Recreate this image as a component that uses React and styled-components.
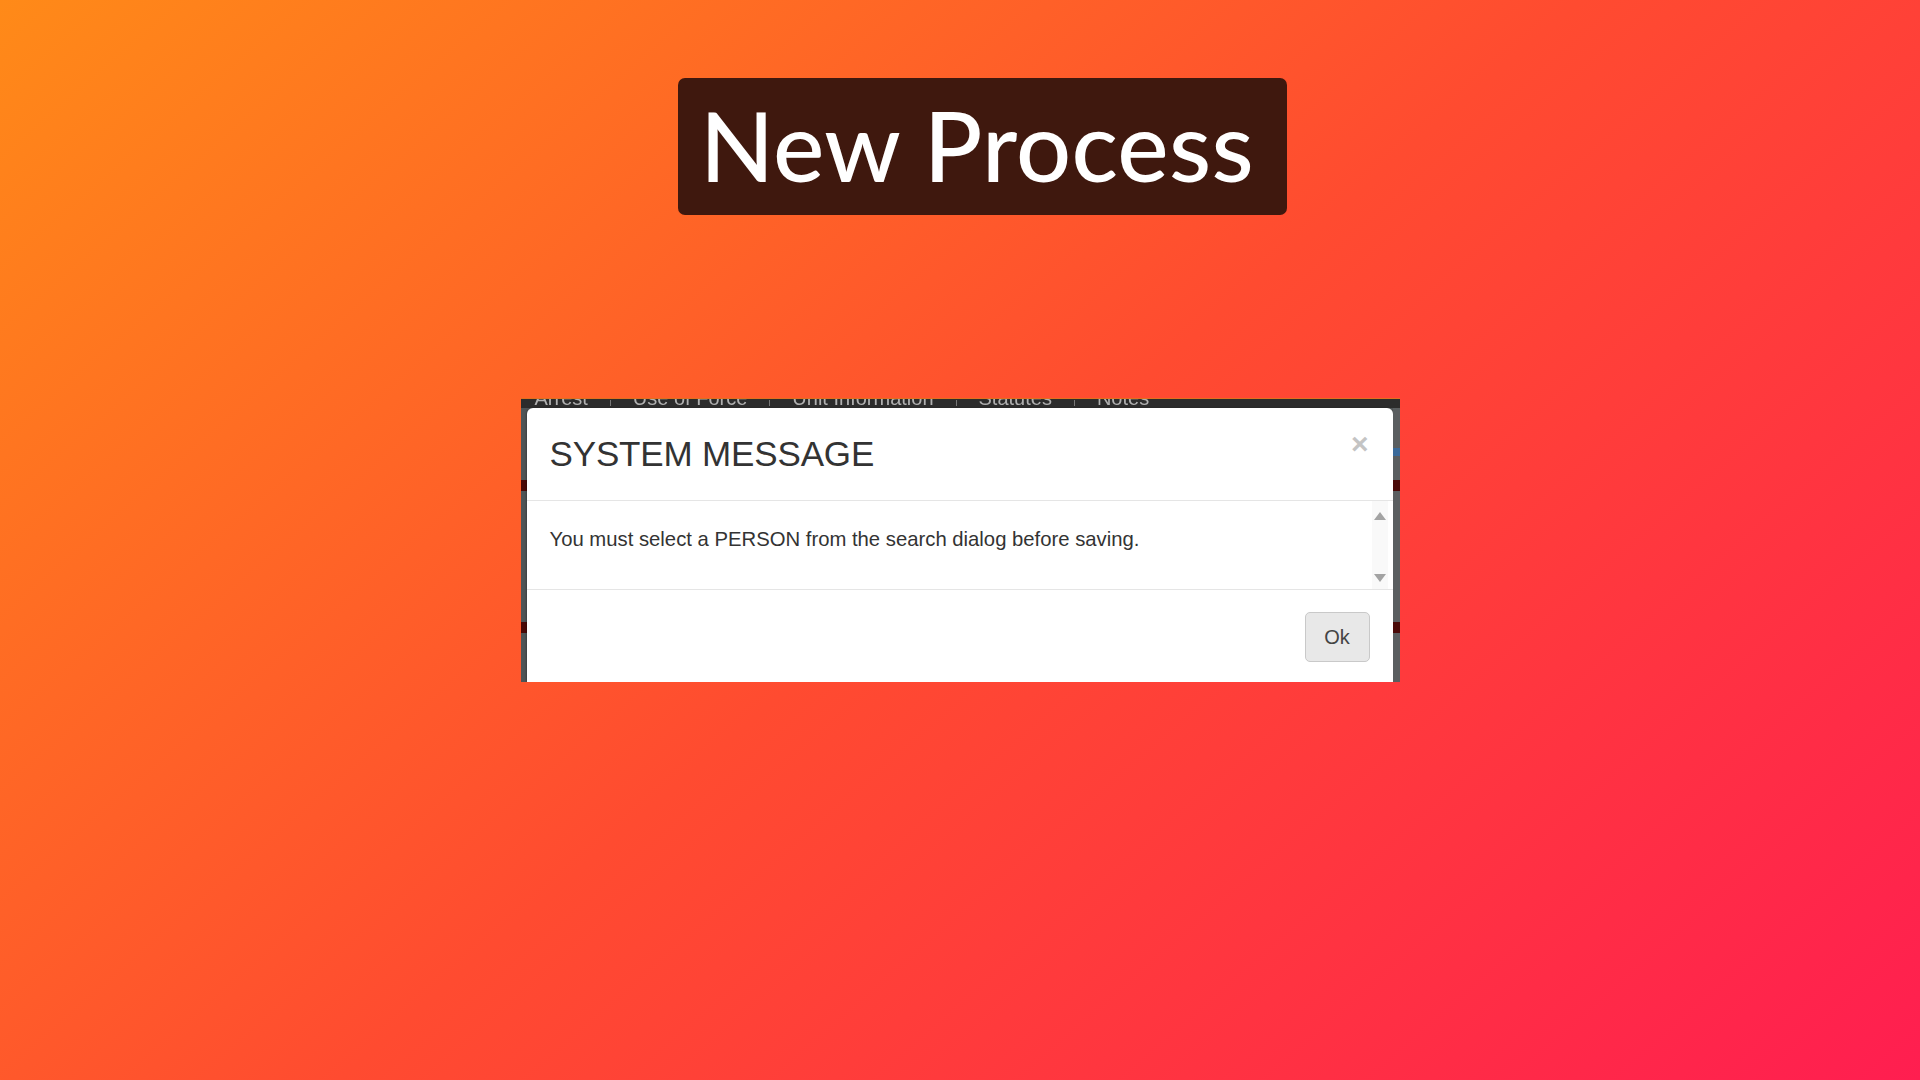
import React from "react";
import styled, { createGlobalStyle } from "styled-components";

const Global = createGlobalStyle`
  html, body { margin: 0; padding: 0; }
  body {
    width: 1920px;
    height: 1080px;
    overflow: hidden;
    font-family: "Liberation Sans", Arial, sans-serif;
  }
  #root { width: 100%; height: 100%; }
`;

const Page = styled.main`
  width: 1920px;
  height: 1080px;
  box-sizing: border-box;
  padding-top: 78px;
  display: flex;
  flex-direction: column;
  align-items: center;
  background: linear-gradient(139deg, #ff8a18 0%, #ff4b30 50%, #ff1e50 100%);
`;

const TitleBox = styled.h1`
  margin: 0 0 0 45px;
  box-sizing: border-box;
  width: 609px;
  height: 137px;
  padding: 0 0 4px 22px;
  display: flex;
  align-items: center;
  background: #3f180e;
  border-radius: 7px;
  color: #ffffff;
  font-family: Lato, "Open Sans", sans-serif;
  font-weight: 500;
  font-size: 97px;
  line-height: 1;
  letter-spacing: 0.3px;
  white-space: nowrap;
`;

const Shot = styled.section`
  margin-top: 183px;
  width: 879px;
  height: 284px;
  display: grid;
  grid-template-columns: 6px 1fr 7px;
  grid-template-rows: 10px 1fr;
  background: #505456;
  overflow: hidden;
`;

const NavStrip = styled.div`
  grid-column: 1 / 4;
  background: #2c2c2c;
  border-top: 1px solid #e0701e;
  overflow: hidden;
  display: flex;
  align-items: flex-start;
  padding-left: 14px;
`;

const NavItem = styled.span`
  margin-top: -11px;
  font-size: 20px;
  line-height: 20px;
  color: #b0b0b0;
  white-space: nowrap;
  filter: blur(0.5px);
`;

const NavSep = styled.span`
  width: 1px;
  height: 6px;
  margin: 1px 22px 0;
  background: #777;
`;

const SideStrip = styled.div`
  display: flex;
  flex-direction: column;
  background: ${(p) => p.$bg};
`;

const Spot = styled.div`
  height: ${(p) => p.$h}px;
  margin-top: ${(p) => p.$top}px;
  background: ${(p) => p.$c};
`;

const Modal = styled.div`
  display: flex;
  flex-direction: column;
  background: #ffffff;
  border-radius: 6px 6px 0 0;
  box-shadow: -1px 0 2px rgba(0, 0, 0, 0.25);
`;

const Header = styled.div`
  height: 92px;
  flex: none;
  display: flex;
  align-items: flex-start;
  justify-content: space-between;
  padding: 0 24px 0 23px;
  border-bottom: 1px solid #e5e5e5;
`;

const Title = styled.h4`
  margin: 26px 0 0;
  font-size: 35px;
  line-height: 40px;
  font-weight: 400;
  color: #333333;
  letter-spacing: -0.15px;
`;

const Close = styled.span`
  margin-top: 16px;
  font-size: 30px;
  line-height: 40px;
  font-weight: 700;
  color: #c4c4c4;
`;

const Body = styled.div`
  height: 88px;
  flex: none;
  display: flex;
  border-bottom: 1px solid #e5e5e5;
`;

const Message = styled.p`
  flex: 1;
  margin: 0;
  padding: 26px 23px 0;
  font-size: 20.3px;
  line-height: 24px;
  color: #333333;
`;

const ScrollBar = styled.div`
  width: 16px;
  margin-right: 5px;
  display: flex;
  flex-direction: column;
  justify-content: space-between;
  align-items: center;
  padding: 11px 0 7px;
  background: #f9f9f9;
`;

const Arrow = styled.span`
  width: 0;
  height: 0;
  border-left: 6px solid transparent;
  border-right: 6px solid transparent;
  ${(p) =>
    p.$up
      ? "border-bottom: 8px solid #a3a3a3;"
      : "border-top: 8px solid #a3a3a3;"}
`;

const Footer = styled.div`
  flex: 1;
  display: flex;
  justify-content: flex-end;
  align-items: flex-start;
  padding: 22px 23px 0;
`;

const OkButton = styled.button`
  width: 65px;
  height: 50px;
  box-sizing: border-box;
  border: 1px solid #c9c9c9;
  border-radius: 5px;
  background: #e8e8e8;
  color: #444444;
  font-family: "Liberation Sans", Arial, sans-serif;
  font-size: 20px;
  padding: 0;
`;

const navItems = ["Arrest", "Use of Force", "Unit Information", "Statutes", "Notes"];

export default function App() {
  return (
    <>
      <Global />
      <Page>
        <TitleBox>New Process</TitleBox>
        <Shot>
          <NavStrip>
            {navItems.map((n, i) => (
              <React.Fragment key={n}>
                {i > 0 && <NavSep />}
                <NavItem>{n}</NavItem>
              </React.Fragment>
            ))}
          </NavStrip>
          <SideStrip $bg="#4f5456">
            <Spot $top={72} $h={11} $c="#4a0a08" />
            <Spot $top={131} $h={11} $c="#4a0a08" />
          </SideStrip>
          <Modal>
            <Header>
              <Title>SYSTEM MESSAGE</Title>
              <Close>×</Close>
            </Header>
            <Body>
              <Message>You must select a PERSON from the search dialog before saving.</Message>
              <ScrollBar>
                <Arrow $up />
                <Arrow />
              </ScrollBar>
            </Body>
            <Footer>
              <OkButton>Ok</OkButton>
            </Footer>
          </Modal>
          <SideStrip $bg="#5a5e60">
            <Spot $top={40} $h={8} $c="#3a6a9a" />
            <Spot $top={24} $h={11} $c="#4a0a08" />
            <Spot $top={131} $h={11} $c="#4a0a08" />
          </SideStrip>
        </Shot>
      </Page>
    </>
  );
}
